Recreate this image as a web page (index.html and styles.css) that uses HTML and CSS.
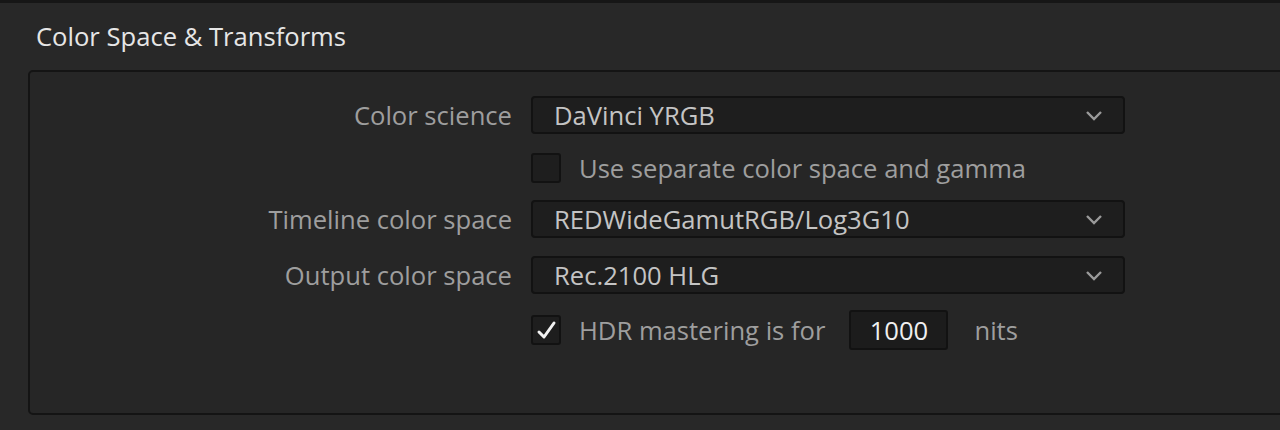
FILE: index.html
```html
<!DOCTYPE html>
<html lang="en">
<head>
  <meta charset="UTF-8">
  <title>Color Space &amp; Transforms</title>
  <link rel="stylesheet" href="styles.css">
</head>
<body>
  <div class="topbar"></div>
  <div class="section">
    <h2>Color Space &amp; Transforms</h2>
    <div class="panel">
      <div class="row">
        <label class="label">Color science</label>
        <div class="select">
          <span>DaVinci YRGB</span>
          <svg class="chevron" width="18" height="11" viewBox="0 0 18 11"><path d="M2 2 L9 9 L16 2" fill="none" stroke="#9a9a9a" stroke-width="2.4"/></svg>
        </div>
      </div>
      <div class="row check-row">
        <span class="label"></span>
        <div class="check"><span class="box"></span><span>Use separate color space and gamma</span></div>
      </div>
      <div class="row">
        <label class="label">Timeline color space</label>
        <div class="select">
          <span>REDWideGamutRGB/Log3G10</span>
          <svg class="chevron" width="18" height="11" viewBox="0 0 18 11"><path d="M2 2 L9 9 L16 2" fill="none" stroke="#9a9a9a" stroke-width="2.4"/></svg>
        </div>
      </div>
      <div class="row">
        <label class="label">Output color space</label>
        <div class="select">
          <span>Rec.2100 HLG</span>
          <svg class="chevron" width="18" height="11" viewBox="0 0 18 11"><path d="M2 2 L9 9 L16 2" fill="none" stroke="#9a9a9a" stroke-width="2.4"/></svg>
        </div>
      </div>
      <div class="row check-row last">
        <span class="label"></span>
        <div class="check">
          <span class="box">
            <svg width="24" height="24" viewBox="0 0 24 24"><path d="M5 14 L10 19 L20 5" fill="none" stroke="#f2f2f2" stroke-width="3" stroke-linecap="round" stroke-linejoin="round"/></svg>
          </span>
          <span>HDR mastering is for</span>
          <span class="num">1000</span>
          <span class="unit">nits</span>
        </div>
      </div>
    </div>
  </div>
</body>
</html>
```

FILE: styles.css
```css
* {
  margin: 0;
  padding: 0;
  box-sizing: border-box;
}

body {
  background: #282828;
  font-family: 'Open Sans', sans-serif;
  color: #9e9e9e;
  width: 1280px;
  height: 430px;
  overflow: hidden;
}

.topbar {
  height: 3px;
  background: #2c2c2c;
  border-bottom: 3px solid #161616;
}

.section {
  padding: 18px 0 0 28px;
}

h2 {
  font-size: 25.6px;
  font-weight: 400;
  color: #e6e6e6;
  margin-left: 8px;
  line-height: 32px;
  margin-bottom: 17px;
}

.panel {
  width: 1300px;
  height: 345px;
  background: #262626;
  border: 2px solid #141414;
  border-radius: 5px;
  padding-top: 24px;
}

.row {
  display: flex;
  align-items: center;
  height: 38px;
  margin-bottom: 19px;
}

.row.check-row {
  height: 30px;
  margin-bottom: 17px;
}

.row:nth-child(3) {
  margin-bottom: 18px;
}

.row:nth-child(4) {
  margin-bottom: 16px;
}

.row.last {
  height: 40px;
}

.label {
  width: 482px;
  text-align: right;
  font-size: 25.6px;
  margin-right: 19px;
}

.select {
  width: 594px;
  height: 38px;
  background: #1e1e1e;
  border: 2px solid #121212;
  border-radius: 4px;
  display: flex;
  align-items: center;
  justify-content: space-between;
  padding: 0 20px 0 21px;
  font-size: 25.6px;
  color: #c4c4c4;
}

.check {
  display: flex;
  align-items: center;
  font-size: 25.6px;
}

.box {
  width: 30px;
  height: 30px;
  background: #1e1e1e;
  border: 2px solid #121212;
  border-radius: 3px;
  margin-right: 18px;
  display: flex;
  align-items: center;
  justify-content: center;
}

.num {
  width: 99px;
  height: 40px;
  margin-left: 24px;
  background: #1c1c1c;
  border: 2px solid #121212;
  border-radius: 3px;
  color: #f0f0f0;
  display: flex;
  align-items: center;
  justify-content: center;
}

.unit {
  margin-left: 26px;
}
```
